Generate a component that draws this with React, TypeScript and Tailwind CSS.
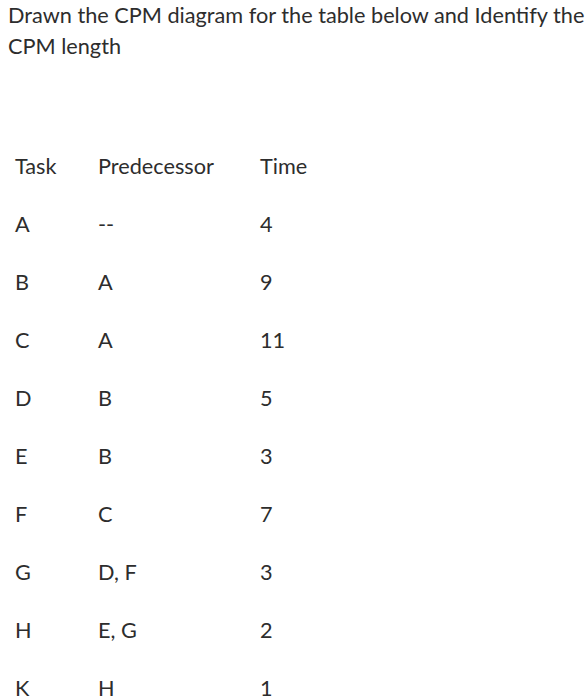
const rows: [string, string, string][] = [
  ["A", "--", "4"],
  ["B", "A", "9"],
  ["C", "A", "11"],
  ["D", "B", "5"],
  ["E", "B", "3"],
  ["F", "C", "7"],
  ["G", "D, F", "3"],
  ["H", "E, G", "2"],
  ["K", "H", "1"],
];

export default function App() {
  return (
    <div className="w-[588px] h-[700px] overflow-hidden bg-white text-[#2d2d2d] font-['Lato','Liberation_Sans',sans-serif]">
      <p className="pl-[8px] text-[21.7px] leading-[31px]">
        Drawn the CPM diagram for the table below and Identify the CPM length
      </p>
      <div className="mt-[75px] pl-[15px] text-[21.7px]">
        <div className="grid grid-cols-[83px_162px_auto] h-[58px] items-center">
          <span>Task</span>
          <span>Predecessor</span>
          <span>Time</span>
        </div>
        {rows.map(([task, pred, time]) => (
          <div key={task} className="grid grid-cols-[83px_162px_auto] h-[58px] items-center">
            <span>{task}</span>
            <span>{pred}</span>
            <span>{time}</span>
          </div>
        ))}
      </div>
    </div>
  );
}
